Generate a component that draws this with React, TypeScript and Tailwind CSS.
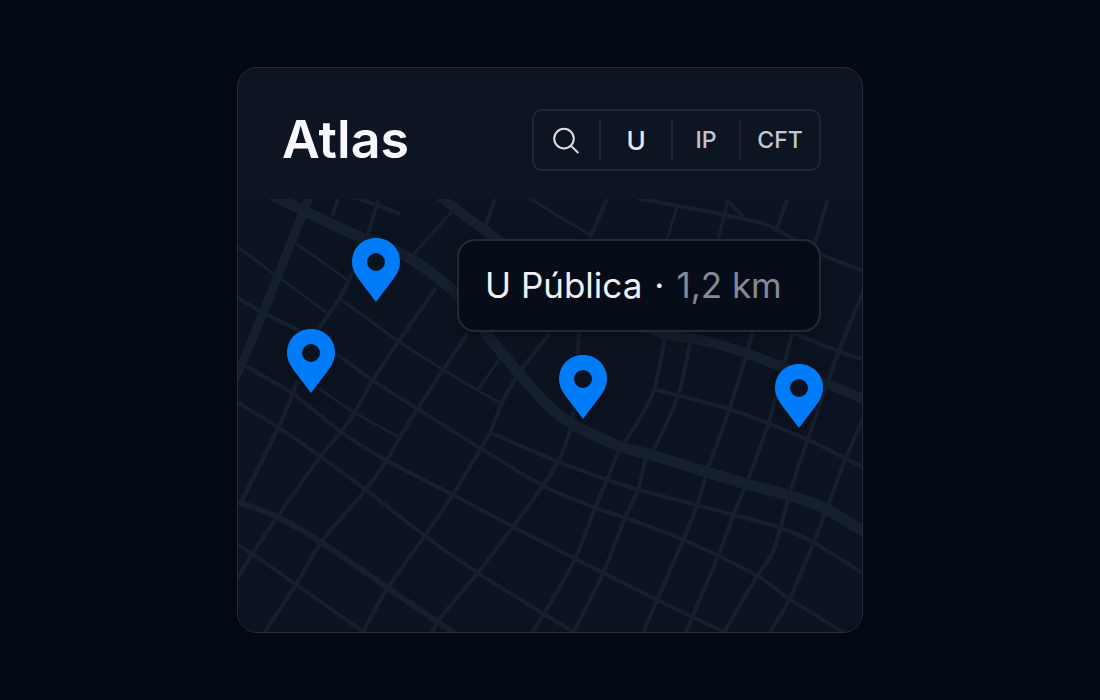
type Point = [number, number];

interface Road {
  width: number;
  points: Point[];
}

const ROADS: Road[] = [
  // Avenues
  { width: 11, points: [[262, 190], [305, 211], [358, 236], [410, 258], [455, 292], [490, 338], [520, 374], [548, 405], [575, 425], [618, 445], [660, 457], [705, 471], [745, 483], [790, 495], [825, 508], [868, 534]] },
  { width: 9, points: [[310, 196], [275, 285], [262, 317], [232, 388]] },
  { width: 10, points: [[436, 193], [475, 223], [510, 248], [570, 290], [652, 330], [707, 341], [743, 352], [783, 367], [830, 385], [868, 401]] },
  { width: 6, points: [[232, 499], [278, 516], [321, 541], [388, 587], [438, 621], [460, 636]] },
  // Streets running south-east
  { width: 3, points: [[232, 242], [275, 274], [327, 312]] },
  { width: 3, points: [[296, 243], [347, 279]] },
  { width: 3, points: [[340, 298], [399, 341], [443, 369], [478, 390], [502, 403]] },
  { width: 4, points: [[232, 294], [265, 313], [299, 330], [336, 353], [373, 380], [419, 409], [481, 448], [543, 485], [595, 507], [625, 517], [683, 539], [718, 555], [757, 575], [789, 598], [850, 636]] },
  { width: 4, points: [[245, 365], [293, 393], [341, 431], [387, 460], [453, 494], [513, 526], [575, 558], [603, 572], [657, 599], [692, 616], [730, 634]] },
  { width: 3, points: [[318, 387], [355, 412], [400, 437]] },
  { width: 4, points: [[232, 398], [279, 427], [321, 456], [366, 489], [425, 535], [478, 572], [544, 613], [580, 635]] },
  { width: 4, points: [[232, 540], [253, 553], [297, 584], [370, 635]] },
  { width: 4, points: [[490, 432], [558, 461], [607, 479], [638, 489], [695, 504], [733, 514], [780, 527], [813, 542], [868, 576]] },
  { width: 4, points: [[655, 389], [678, 395], [730, 409], [768, 423], [807, 439], [845, 458], [868, 470]] },
  { width: 4, points: [[793, 333], [838, 351], [868, 361]] },
  { width: 4, points: [[636, 198], [678, 206], [725, 215], [767, 225], [793, 239], [820, 254], [868, 273]] },
  { width: 4, points: [[727, 201], [743, 217]] },
  { width: 3, points: [[522, 194], [590, 235]] },
  { width: 4, points: [[350, 196], [377, 205], [401, 214]] },
  // Streets running south-west
  { width: 4, points: [[340, 194], [333, 216]] },
  { width: 4, points: [[379, 199], [368, 236]] },
  { width: 3, points: [[452, 212], [410, 258]] },
  { width: 4, points: [[354, 270], [340, 298], [318, 330]] },
  { width: 4, points: [[436, 288], [399, 341], [373, 380], [355, 412], [341, 432], [321, 456], [278, 516], [253, 553], [232, 588]] },
  { width: 4, points: [[468, 333], [443, 370], [418, 408], [400, 437], [387, 460], [366, 489], [322, 541], [297, 583], [262, 636]] },
  { width: 4, points: [[298, 380], [290, 402], [279, 427], [242, 501]] },
  { width: 4, points: [[497, 194], [486, 225]] },
  { width: 4, points: [[609, 194], [590, 238]] },
  { width: 3, points: [[502, 355], [478, 390]] },
  { width: 4, points: [[550, 333], [520, 371], [502, 403], [490, 432], [481, 448], [453, 494], [425, 535], [388, 587], [373, 613], [361, 636]] },
  { width: 4, points: [[579, 325], [576, 390], [570, 430], [558, 461], [543, 485], [513, 526], [478, 572], [442, 615], [430, 636]] },
  { width: 4, points: [[667, 325], [654, 389], [636, 424], [618, 452], [607, 479], [595, 507], [575, 558], [544, 613], [529, 636]] },
  { width: 4, points: [[690, 342], [678, 395], [654, 448], [645, 460], [638, 489], [625, 517], [603, 572], [571, 636]] },
  { width: 4, points: [[752, 333], [745, 357], [729, 409], [708, 467], [697, 504], [683, 539], [657, 599], [641, 636]] },
  { width: 4, points: [[792, 333], [785, 358], [768, 423], [747, 480], [733, 514], [718, 555], [692, 616], [684, 636]] },
  { width: 4, points: [[864, 288], [838, 351], [827, 382], [807, 439], [790, 490], [780, 527], [772, 552], [757, 575], [737, 608], [721, 636]] },
  { width: 4, points: [[866, 410], [845, 458], [828, 503], [813, 542], [789, 598], [767, 636]] },
  { width: 3, points: [[677, 206], [666, 242]] },
  { width: 3, points: [[728, 198], [717, 242]] },
  { width: 4, points: [[788, 196], [775, 232]] },
  { width: 4, points: [[828, 196], [814, 244]] },
];

const PINS = [
  { name: "Pin 1", place: "left-[114px] top-[39px]" },
  { name: "Pin 2", place: "left-[49px] top-[130px]" },
  { name: "Pin 3", place: "left-[321px] top-[156px]" },
  { name: "Pin 4", place: "left-[537px] top-[165px]" },
];

// Catmull-Rom style spline through the points, written as cubic Bézier segments.
function smoothPath(points: Point[]): string {
  let d = `M${points[0][0]} ${points[0][1]}`;
  for (let i = 0; i < points.length - 1; i++) {
    const p0 = points[Math.max(i - 1, 0)];
    const p1 = points[i];
    const p2 = points[i + 1];
    const p3 = points[Math.min(i + 2, points.length - 1)];
    d += `C${p1[0] + (p2[0] - p0[0]) / 8} ${p1[1] + (p2[1] - p0[1]) / 8} ${p2[0] - (p3[0] - p1[0]) / 8} ${p2[1] - (p3[1] - p1[1]) / 8} ${p2[0]} ${p2[1]}`;
  }
  return d;
}

function StreetMap() {
  return (
    <svg
      className="absolute inset-0 size-full"
      viewBox="238 199 624 432"
      preserveAspectRatio="xMidYMid slice"
      fill="none"
      stroke="#151f2d"
      aria-hidden="true"
    >
      {ROADS.map((road, i) => (
        <path key={i} d={smoothPath(road.points)} strokeWidth={road.width} />
      ))}
    </svg>
  );
}

function SearchIcon() {
  return (
    <svg className="size-7" viewBox="0 0 28 28" fill="none" stroke="currentColor" strokeWidth="2" aria-hidden="true">
      <circle cx="11" cy="12.6" r="9.8" />
      <path d="M17.8 19.6L25.4 27" />
    </svg>
  );
}

function PinIcon() {
  return (
    <svg className="h-16 w-12 drop-shadow-[0_3px_5px_rgba(0,0,0,0.35)]" viewBox="0 0 48 64" aria-hidden="true">
      <path
        fill="#007cfb"
        d="M24 0C10.5 0 0 10.4 0 23.6C0 30.2 2.4 35.4 6.6 41L24 64L41.4 41C45.6 35.4 48 30.2 48 23.6C48 10.4 37.5 0 24 0Z"
      />
      <circle cx="24" cy="24" r="9" fill="#0b1320" />
    </svg>
  );
}

export default function App() {
  return (
    <main className="flex min-h-screen items-center justify-center bg-[#040a16] font-['Inter',sans-serif]">
      <section className="w-full max-w-[626px] overflow-hidden rounded-[20px] border border-[#252d3a] bg-[#0e1522] shadow-[0_2px_10px_rgba(0,0,0,0.3)]">
        <header className="flex items-center justify-between pt-[41px] pr-[41px] pb-7 pl-11">
          <h1 className="text-[52px] leading-[62px] font-semibold text-[#f8f9fe]">Atlas</h1>
          <div className="flex h-[62px] items-center divide-x-2 divide-[#19222f] rounded-[10px] border-2 border-[#1e2735] text-[23px] font-medium text-[#c4c7d1]">
            <button type="button" aria-label="Buscar" className="flex h-10 w-[67px] items-center justify-center text-[#dcdee5]">
              <SearchIcon />
            </button>
            <button type="button" className="h-10 w-[72px] text-[26px] text-[#e9eaef]">U</button>
            <button type="button" className="h-10 w-[68px]">IP</button>
            <button type="button" className="h-10 w-[78px]">CFT</button>
          </div>
        </header>

        <div className="relative flex min-h-[433px] items-start justify-end bg-[#0c1320] pt-10 pr-[41px]">
          <StreetMap />
          {PINS.map((pin) => (
            <button key={pin.name} type="button" aria-label={pin.name} className={`absolute ${pin.place}`}>
              <PinIcon />
            </button>
          ))}
          <div className="relative flex h-[93px] w-[364px] items-center gap-3 rounded-[18px] border-2 border-[#222939] bg-[#070d18] pl-[26px] text-[35px] text-[#f0f1f6] shadow-[0_4px_12px_rgba(0,0,0,0.3)]">
            <span>U Pública</span>
            <span>·</span>
            <span className="text-[#858895]">1,2 km</span>
          </div>
        </div>
      </section>
    </main>
  );
}
